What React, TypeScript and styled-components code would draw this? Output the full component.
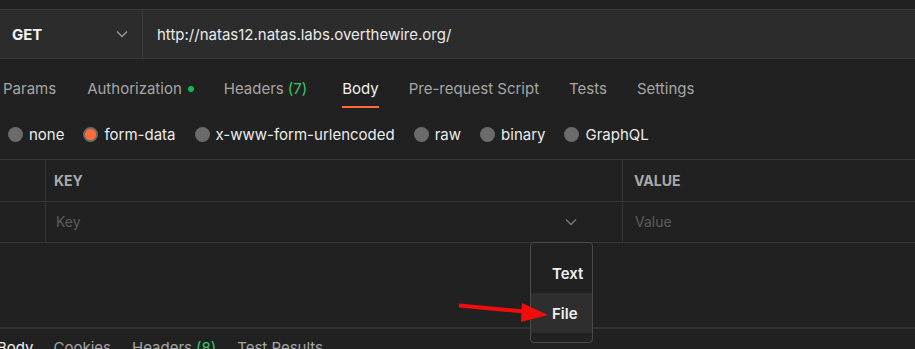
import React from "react";
import styled, { createGlobalStyle } from "styled-components";

const Global = createGlobalStyle`
  html, body { margin: 0; padding: 0; background: #212121; }
  * { box-sizing: border-box; }
`;

const Page = styled.div`
  position: relative;
  width: 915px;
  height: 349px;
  overflow: hidden;
  background: #212121;
  font-family: Inter, "Noto Sans", sans-serif;
  font-size: 15px;
  color: #e6e6e6;
  padding-top: 9px;
`;

const RequestBar = styled.div`
  display: flex;
  height: 50px;
  background: #2c2c2c;
  border-top: 1px solid #383838;
  border-bottom: 1px solid #383838;
`;

const Method = styled.div`
  width: 143px;
  flex: none;
  display: flex;
  align-items: center;
  justify-content: space-between;
  padding: 0 14px 0 12px;
  border-right: 1px solid #3a3a3a;
  font-weight: 700;
  color: #f2f2f2;
`;

const Url = styled.div`
  display: flex;
  align-items: center;
  padding-left: 14px;
  color: #e9e9e9;
`;

const Tabs = styled.div`
  display: flex;
  align-items: flex-start;
  height: 51px;
  padding-top: 19px;
  padding-left: 3px;
`;

const Tab = styled.div<{ $active?: boolean; $gap: number }>`
  display: flex;
  align-items: flex-start;
  height: 30px;
  line-height: 21px;
  margin-right: ${(p) => p.$gap}px;
  color: ${(p) => (p.$active ? "#f2f2f2" : "#a6a6a6")};
  border-bottom: 2px solid ${(p) => (p.$active ? "#ff6c37" : "transparent")};
  white-space: nowrap;
`;

const Count = styled.span`
  color: #3ec467;
  margin-left: 4px;
`;

const Dot = styled.span`
  width: 6px;
  height: 6px;
  border-radius: 50%;
  background: #0cbb52;
  margin: 8px 0 0 6px;
`;

const Radios = styled.div`
  display: flex;
  align-items: center;
  height: 49px;
  padding-left: 8px;
`;

const RadioItem = styled.label<{ $gap: number }>`
  display: flex;
  align-items: center;
  margin-right: ${(p) => p.$gap}px;
  color: #ececec;
  white-space: nowrap;
`;

const Circle = styled.span<{ $on?: boolean }>`
  width: 15px;
  height: 15px;
  border-radius: 50%;
  margin-right: 6px;
  background: ${(p) => (p.$on ? "#ff6c37" : "#6b6b6b")};
  border: ${(p) => (p.$on ? "2px solid #6b6b6b" : "none")};
`;

const Table = styled.div`
  border-top: 1px solid #353535;
`;

const Row = styled.div<{ $h: number }>`
  display: grid;
  grid-template-columns: 44px 579px 1fr;
  height: ${(p) => p.$h}px;
  border-bottom: 1px solid #353535;
`;

const Cell = styled.div<{ $head?: boolean; $pad: number }>`
  display: flex;
  align-items: center;
  justify-content: space-between;
  padding-left: ${(p) => p.$pad}px;
  padding-right: 45px;
  padding-bottom: ${(p) => (p.$head ? 0 : 1)}px;
  border-right: 1px solid #353535;
  font-weight: ${(p) => (p.$head ? 700 : 400)};
  font-size: 14px;
  color: ${(p) => (p.$head ? "#a9a9a9" : "#5c5c5c")};
  &:last-child { border-right: none; }
`;

const Empty = styled.div`
  height: 86px;
  border-bottom: 2px solid #333333;
`;

const BottomTabs = styled.div`
  display: flex;
  margin-top: 9px;
  margin-left: -3px;
  line-height: 20px;
`;

const BottomTab = styled.div<{ $active?: boolean; $gap: number }>`
  margin-right: ${(p) => p.$gap}px;
  color: ${(p) => (p.$active ? "#f2f2f2" : "#a6a6a6")};
  white-space: nowrap;
`;

const Menu = styled.div`
  position: absolute;
  left: 530px;
  top: 242px;
  width: 63px;
  height: 101px;
  background: #212121;
  border: 1px solid #4a4a4a;
  border-radius: 4px;
  padding-top: 10px;
  display: flex;
  flex-direction: column;
`;

const MenuItem = styled.div<{ $hl?: boolean }>`
  height: 40px;
  display: flex;
  align-items: center;
  padding-left: 21px;
  font-weight: 600;
  font-size: 15px;
  color: #f0f0f0;
  background: ${(p) => (p.$hl ? "#2e2e2e" : "transparent")};
`;

const Arrow = styled.svg`
  position: absolute;
  left: 455px;
  top: 298px;
`;

const Chevron = ({ color }: { color: string }) => (
  <svg width="12" height="8" viewBox="0 0 12 8">
    <path d="M1 1.5 L6 6.5 L11 1.5" fill="none" stroke={color} strokeWidth="1.4" />
  </svg>
);

export default function App() {
  return (
    <>
      <Global />
      <Page>
        <RequestBar>
          <Method>
            GET
            <Chevron color="#9a9a9a" />
          </Method>
          <Url>http://natas12.natas.labs.overthewire.org/</Url>
        </RequestBar>
        <Tabs>
          <Tab $gap={31}>Params</Tab>
          <Tab $gap={30}>
            Authorization
            <Dot />
          </Tab>
          <Tab $gap={35}>
            Headers<Count>(7)</Count>
          </Tab>
          <Tab $gap={30} $active>
            Body
          </Tab>
          <Tab $gap={30}>Pre-request Script</Tab>
          <Tab $gap={30}>Tests</Tab>
          <Tab $gap={30}>Settings</Tab>
        </Tabs>
        <Radios>
          <RadioItem $gap={19}>
            <Circle />
            none
          </RadioItem>
          <RadioItem $gap={19}>
            <Circle $on />
            form-data
          </RadioItem>
          <RadioItem $gap={19}>
            <Circle />
            x-www-form-urlencoded
          </RadioItem>
          <RadioItem $gap={19}>
            <Circle />
            raw
          </RadioItem>
          <RadioItem $gap={19}>
            <Circle />
            binary
          </RadioItem>
          <RadioItem $gap={19}>
            <Circle />
            GraphQL
          </RadioItem>
        </Radios>
        <Table>
          <Row $h={42}>
            <Cell $pad={0} />
            <Cell $head $pad={10}>KEY</Cell>
            <Cell $head $pad={11}>VALUE</Cell>
          </Row>
          <Row $h={41}>
            <Cell $pad={0} />
            <Cell $pad={12}>
              Key
              <Chevron color="#7a7a7a" />
            </Cell>
            <Cell $pad={12}>Value</Cell>
          </Row>
        </Table>
        <Empty />
        <BottomTabs>
          <BottomTab $active $gap={20}>Body</BottomTab>
          <BottomTab $gap={21}>Cookies</BottomTab>
          <BottomTab $gap={21}>
            Headers<Count>(8)</Count>
          </BottomTab>
          <BottomTab $gap={20}>Test Results</BottomTab>
        </BottomTabs>
        <Menu>
          <MenuItem>Text</MenuItem>
          <MenuItem $hl>File</MenuItem>
        </Menu>
        <Arrow width="100" height="30" viewBox="0 0 100 30">
          <line x1="4" y1="7.5" x2="70" y2="13.5" stroke="#f20d0d" strokeWidth="4" />
          <polygon points="67,5 66,24 93,17" fill="#f20d0d" />
        </Arrow>
      </Page>
    </>
  );
}
